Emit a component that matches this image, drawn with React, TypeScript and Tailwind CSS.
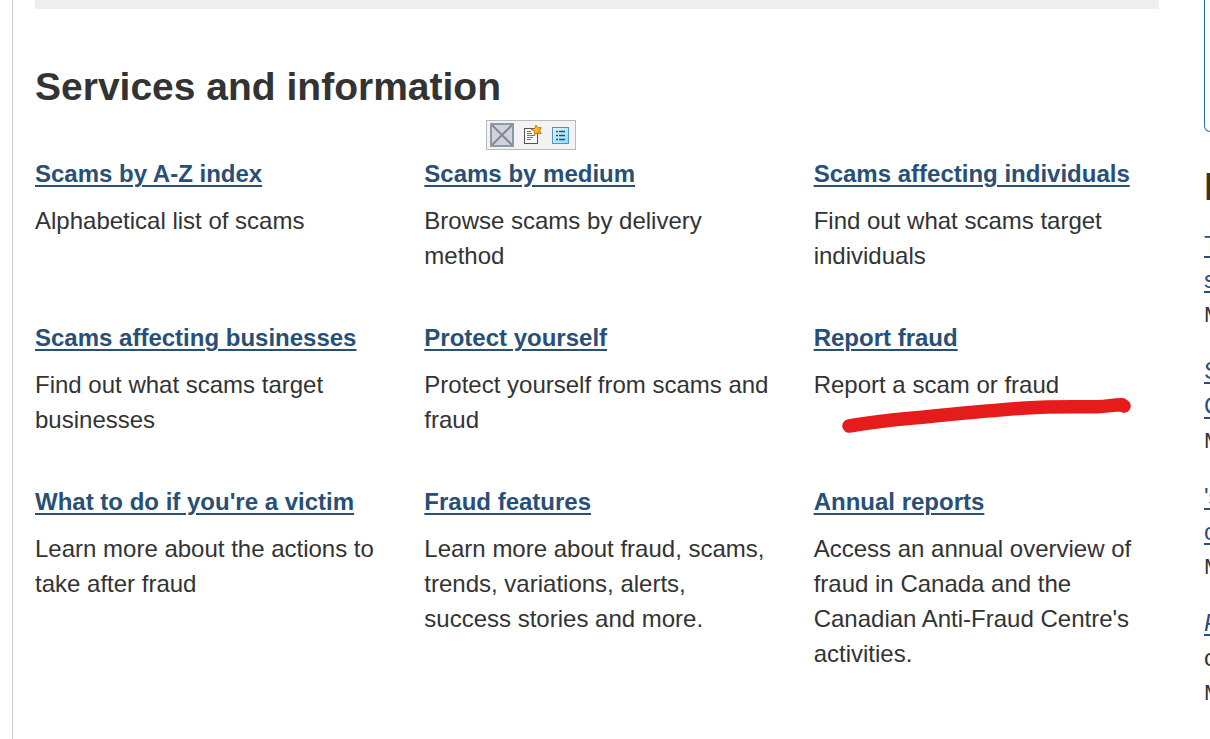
import React from "react";

type Service = { title: string; text: string; marked?: boolean };

const services: Service[] = [
  { title: "Scams by A-Z index", text: "Alphabetical list of scams" },
  { title: "Scams by medium", text: "Browse scams by delivery method" },
  { title: "Scams affecting individuals", text: "Find out what scams target individuals" },
  { title: "Scams affecting businesses", text: "Find out what scams target businesses" },
  { title: "Protect yourself", text: "Protect yourself from scams and fraud" },
  { title: "Report fraud", text: "Report a scam or fraud", marked: true },
  { title: "What to do if you're a victim", text: "Learn more about the actions to take after fraud" },
  {
    title: "Fraud features",
    text: "Learn more about fraud, scams, trends, variations, alerts, success stories and more.",
  },
  {
    title: "Annual reports",
    text: "Access an annual overview of fraud in Canada and the Canadian Anti-Fraud Centre's activities.",
  },
];

const news = [
  { lines: ["T", "s"], date: "M" },
  { lines: ["S", "C"], date: "M" },
  { lines: ["'s", "c"], date: "M" },
  { lines: ["P"], rest: "c", date: "M" },
];

function CrossIcon() {
  return (
    <svg width="24" height="24" viewBox="0 0 24 24" aria-hidden="true">
      <rect x="1" y="1" width="22" height="22" fill="#d0d2dc" stroke="#8b9aa6" strokeWidth="2" />
      <path d="M2 2 22 22M22 2 2 22" stroke="#838798" strokeWidth="2" />
    </svg>
  );
}

function PageStarIcon() {
  return (
    <svg width="18" height="22" viewBox="0 0 18 22" aria-hidden="true">
      <defs>
        <linearGradient id="star" x1="0" y1="0" x2="1" y2="1">
          <stop offset="0" stopColor="#ffe45c" />
          <stop offset="0.6" stopColor="#ffb21c" />
          <stop offset="1" stopColor="#e98300" />
        </linearGradient>
      </defs>
      <rect x="0.5" y="4.500" width="13" height="15" fill="#fafafa" stroke="#555" />
      <path d="M3 7.5h4M3 9.5h5M3 11.5h8M3 13.5h6M3 15.5h4" stroke="#777" />
      <path
        d="M12 1l1.6 2.800 3.700-.2-1.600 3.100 1.500 3.100-3.600-.8-2.900 1.600-.2-3.400L7.400 5.500l3.400-.9z"
        fill="url(#star)"
        stroke="#b9760f"
        strokeWidth="0.9"
        strokeLinejoin="round"
      />
    </svg>
  );
}

function ListIcon() {
  return (
    <svg width="17" height="17" viewBox="0 0 17 17" aria-hidden="true">
      <defs>
        <linearGradient id="list" x1="0" y1="0" x2="1" y2="1">
          <stop offset="0" stopColor="#e4f7ff" />
          <stop offset="1" stopColor="#8fd8fa" />
        </linearGradient>
      </defs>
      <rect x="0.5" y="0.5" width="16" height="16" fill="url(#list)" stroke="#4f97c6" />
      <path d="M4 4.5h2M4 8.5h2M4 12.5h2M7 4.5h6M7 8.5h6M7 12.5h6" stroke="#1f5468" strokeWidth="1.3" />
    </svg>
  );
}

function Toolbar() {
  return (
    <div
      role="toolbar"
      className="absolute bottom-full left-[62px] mb-1.5 flex h-[30px] w-[90px] items-center justify-between border border-[#bababa] bg-[#f3f3f3] pr-1.5 pl-[3px]"
    >
      <button type="button" aria-label="Close">
        <CrossIcon />
      </button>
      <button type="button" aria-label="Favourite">
        <PageStarIcon />
      </button>
      <button type="button" aria-label="List">
        <ListIcon />
      </button>
    </div>
  );
}

function Marker() {
  return (
    <svg
      className="pointer-events-none absolute top-[77px] left-[26px]"
      width="292"
      height="40"
      viewBox="0 0 292 40"
      aria-hidden="true"
    >
      <path
        d="M9 29C30 25.500 49 23 68 21.500C105 18 151 13 186 11C216 9 240 10 257 9.800C268 9.500 274 7.500 282 7.800L284 9"
        fill="none"
        stroke="#e61c1c"
        strokeWidth="13.5"
        strokeLinecap="round"
        strokeLinejoin="round"
      />
    </svg>
  );
}

export default function App() {
  return (
    <div className="flex min-h-screen overflow-hidden bg-white pl-3 font-['Liberation_Sans',Arial,sans-serif] text-2xl leading-[35px] text-[#333]">
      <main className="min-w-0 flex-1 border-l border-[#ccc] pr-[45px] pl-[22px]">
        <div className="h-[9px] bg-[#eee]" />
        <h1 className="mt-[54px] text-[39px] leading-[48px] font-bold">Services and information</h1>
        <div className="mt-[45px] grid grid-cols-3 gap-x-11 gap-y-[47px]">
          {services.map((s, i) => (
            <section key={s.title} className="relative">
              {i === 1 && <Toolbar />}
              <h2 className="mb-3 leading-[35px] font-bold">
                <a href="#" className="text-[#284f76] underline decoration-2 underline-offset-3">
                  {s.title}
                </a>
              </h2>
              <p>{s.text}</p>
              {s.marked && <Marker />}
            </section>
          ))}
        </div>
      </main>
      <aside className="w-1.5 shrink-0 overflow-hidden whitespace-nowrap">
        <div className="h-[132px] w-80 rounded-b-md border border-t-0 border-[#2572b4]" />
        <h2 className="mt-[31px] text-[39px] leading-[48px] font-bold">N</h2>
        <ul className="mt-4">
          {news.map((n, i) => (
            <li key={i} className="mb-[21px]">
              {n.lines.map((line) => (
                <a
                  key={line}
                  href="#"
                  className={`block text-[#284f76] underline decoration-2 underline-offset-3 ${n.rest ? "italic" : ""}`}
                >
                  {line}
                </a>
              ))}
              {n.rest && <p>{n.rest}</p>}
              <p className="text-[22px]">{n.date}</p>
            </li>
          ))}
        </ul>
      </aside>
    </div>
  );
}
